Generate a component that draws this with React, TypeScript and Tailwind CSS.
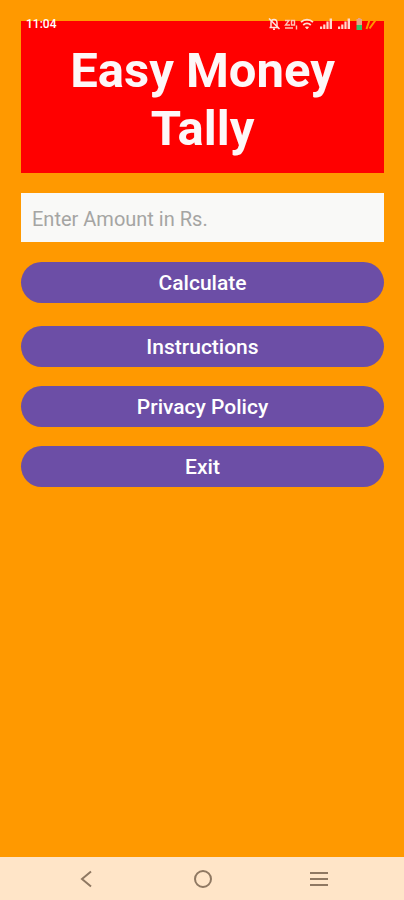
import type { ReactNode } from "react";

function StatusBar() {
  return (
    <div className="absolute inset-x-0 top-0 flex h-12 items-center justify-between pr-6 pl-[26px] text-white">
      <span className="text-xs font-medium">11:04</span>
      <svg width="112" height="14" viewBox="0 0 112 14" fill="none" aria-hidden="true">
        {/* muted bell */}
        <g stroke="#ffe3dc" strokeWidth="1.5">
          <path d="M3 10.500V6a3 3.500 0 0 1 6 0v4.500M1.500 10.500h9M5 12.300h2" />
          <path d="M1 1.500l10.500 10.500" />
        </g>
        {/* network speed */}
        <g stroke="#ffc4b4" strokeWidth="1.4">
          <path d="M17 3.500h4L17.500 8H22M23.500 3.500h3V8h-3zM17 11h8" />
          <path d="M28.500 8.500v4" />
        </g>
        {/* wifi */}
        <g stroke="#ffe0d0" strokeWidth="1.800">
          <path d="M33 5.200c3.500-3.400 8.500-3.400 12 0M35.200 8c2.200-2 5.400-2 7.600 0" />
          <path d="M37.500 10h3L39 12z" fill="#ffe0d0" strokeWidth="0.800" />
        </g>
        {/* signal bars */}
        <g fill="#ffd9cf">
          <path d="M52 9.500h2.200V12H52zM55.200 7.500h2.200V12h-2.200zM58.400 4.500h2.200V12h-2.200zM61.600 1.500H64V12h-2.400z" />
          <path d="M70 9.500h2.200V12H70zM73.200 7.500h2.200V12h-2.200zM76.400 4.500h2.200V12h-2.200zM79.600 1.500H82V12h-2.400z" />
        </g>
        {/* battery */}
        <path d="M88.500 2h1.500V1h2.500v1H94v6h-5.500z" fill="#e8a487" />
        <path d="M88.500 8H94v5h-5.500z" fill="#35c56b" />
        <path d="M98.500 12l3-9M101.500 11.500L108 2.500" stroke="#ff9800" strokeWidth="2" />
      </svg>
    </div>
  );
}

function MenuButton({ children }: { children: ReactNode }) {
  return (
    <button
      type="button"
      className="h-[41px] w-full rounded-full bg-[#6c4ea6] pt-[3px] text-[21px] font-medium text-white"
    >
      {children}
    </button>
  );
}

function NavBar() {
  return (
    <nav className="grid grid-cols-[1fr_auto_1fr] items-center gap-[92px] bg-[#ffe5c8] pt-[10px] pb-[9px] pl-px text-[#8f7862]">
      <button type="button" aria-label="Back" className="justify-self-end">
        <svg width="24" height="24" viewBox="0 0 24 24" fill="none" stroke="currentColor" strokeWidth="2">
          <path d="M16 4.500L7 12l9 7.500" />
        </svg>
      </button>
      <button type="button" aria-label="Home">
        <svg width="24" height="24" viewBox="0 0 24 24" fill="none" stroke="currentColor" strokeWidth="2">
          <circle cx="12" cy="12" r="8" />
        </svg>
      </button>
      <button type="button" aria-label="Recent apps" className="justify-self-start">
        <svg width="24" height="24" viewBox="0 0 24 24" fill="none" stroke="currentColor" strokeWidth="2">
          <path d="M3 6h18M3 12h18M3 18h18" />
        </svg>
      </button>
    </nav>
  );
}

export default function App() {
  return (
    <div className="relative flex min-h-screen flex-col bg-[#ff9900] font-['Roboto',sans-serif]">
      <main className="flex-1 pt-[21px] pr-5 pl-[21px]">
        <h1 className="bg-[#ff0000] px-8 pt-[21px] pb-[15px] text-center text-[49px] leading-[58px] font-bold text-[#fdf7f8]">
          Easy Money Tally
        </h1>

        <input
          type="text"
          inputMode="numeric"
          aria-label="Enter Amount in Rs."
          placeholder="Enter Amount in Rs."
          className="mt-5 h-[49px] w-full bg-[#f9f9f7] px-[11px] pt-[2px] text-xl text-gray-800 placeholder:text-[#a5a5a3]"
        />

        <div className="mt-5">
          <MenuButton>Calculate</MenuButton>
        </div>

        <div className="mt-[23px] flex flex-col gap-[19px]">
          <MenuButton>Instructions</MenuButton>
          <MenuButton>Privacy Policy</MenuButton>
          <MenuButton>Exit</MenuButton>
        </div>
      </main>

      <NavBar />
      <StatusBar />
    </div>
  );
}
